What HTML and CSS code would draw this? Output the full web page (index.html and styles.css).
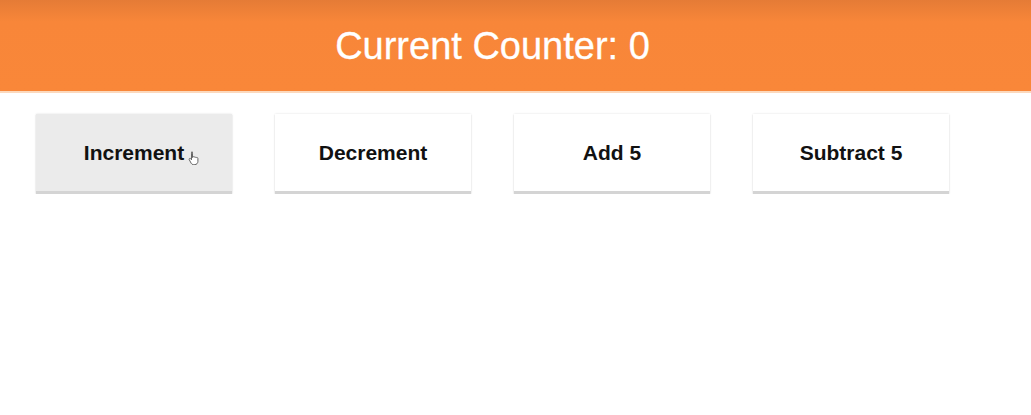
FILE: index.html
```html
<!DOCTYPE html>
<html>
<head>
<meta charset="utf-8">
<link rel="stylesheet" href="styles.css">
</head>
<body>
<header class="header">
  <h1 class="title">Current Counter: 0</h1>
</header>
<main class="controls">
  <button class="btn btn-hover">Increment
    <svg class="cursor" width="12" height="14" viewBox="0 0 12 14">
      <path d="M3.5 1.2c.6 0 1 .4 1 1v4.3l.3-.6c.5-.3 1-.2 1.3.2.4-.3 1-.2 1.3.2.4-.3 1-.1 1.3.3.5-.2 1.2 0 1.2.8v3c0 1.8-1.3 3.2-3.1 3.2H5.4c-1 0-1.7-.5-2.2-1.3L1.2 8.6c-.3-.5-.1-1 .4-1.2.4-.2.9 0 1.2.4l.7 1V2.2c0-.6.4-1 1-1z" fill="#fff" stroke="#555" stroke-width="0.9"/>
    </svg>
  </button>
  <button class="btn">Decrement</button>
  <button class="btn">Add 5</button>
  <button class="btn">Subtract 5</button>
</main>
</body>
</html>
```
FILE: styles.css
```css
html, body {
  margin: 0;
  padding: 0;
  background: #ffffff;
  font-family: "Liberation Sans", Arial, sans-serif;
}
.header {
  height: 91px;
  background: linear-gradient(#e57b36, #f88639 22px, #f98739);
  display: flex;
  align-items: center;
  justify-content: center;
  border-bottom: 2px solid #fcd9bd;
  padding-right: 46px;
}
.title {
  margin: 0;
  color: #ffffff;
  font-weight: normal;
  font-size: 38px;
  line-height: 1;
  -webkit-text-stroke: 0.3px #ffffff;
}
.controls {
  display: flex;
  gap: 43px;
  padding: 21px 0 0 36px;
}
.btn {
  position: relative;
  box-sizing: border-box;
  width: 196px;
  height: 80px;
  border: none;
  border-bottom: 3px solid #d4d4d4;
  background: #ffffff;
  font-family: "Liberation Sans", Arial, sans-serif;
  font-weight: bold;
  font-size: 21px;
  color: #111111;
  box-shadow: 0 1px 1px rgba(0, 0, 0, 0.12), 0 0 2px rgba(0, 0, 0, 0.12);
  padding: 0;
}
.btn-hover {
  background: #ebebeb;
}
.cursor {
  position: absolute;
  left: 152px;
  top: 37px;
}
```
